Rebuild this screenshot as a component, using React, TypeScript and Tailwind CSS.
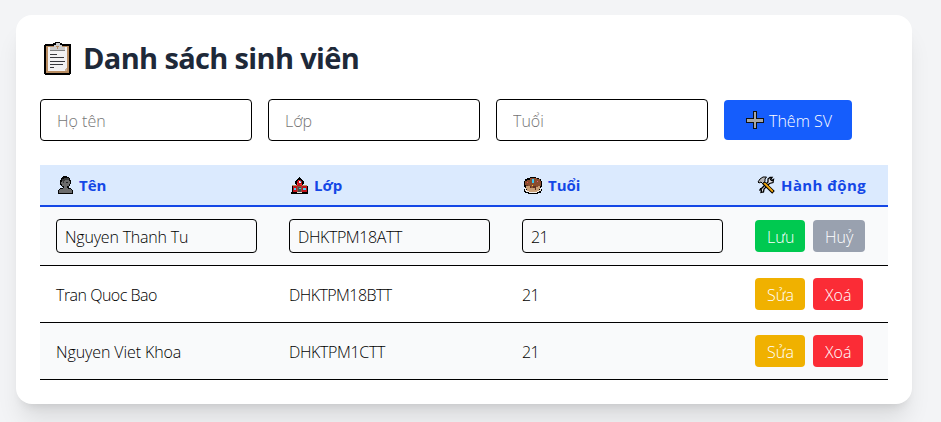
import React from "react";

function ClipboardIcon() {
  return (
    <svg className="mr-[11px] -mt-0.5 block h-[33px] w-7 shrink-0" viewBox="0 0 28 33" shapeRendering="crispEdges">
      <path d="M1 2h8V1h2V0h5v1h2v1h9v30h-1v1H1v-1H0V3h1z" fill="#000" />
      <path d="M2 4h23v27H2z" fill="#b98d62" />
      <path d="M4 5h19v21h-1v1h-1v2H4z" fill="#f3f2f3" />
      <path d="M10 3h2V1h4v2h2v2h3v3H6V5h4z" fill="#cbcbcb" />
      <path d="M12 4h3v1h-1v2h-1V5h-1z" fill="#b98d62" />
      <path d="M6 8h15v1H6z" fill="#808080" />
      <path d="M6 12h7v1H6zM6 15h14v1H6zM6 19h15v1H6zM6 22h13v1H6zM6 25h4v1H6z" fill="#38383d" />
      <path d="M21 27h1v-1h1v3h-2z" fill="#cbb39c" />
    </svg>
  );
}

function PersonIcon() {
  return (
    <svg className="block h-[18px] w-[15px] shrink-0" viewBox="0 0 15 18" shapeRendering="crispEdges">
      <path d="M5 0h4v1h2v1h1v2h1v4h-1v2h-1v2h2v1h1v1h1v4H0v-4h1v-1h1v-1h3v-1H4v-1H3V9H2V4h1V2h1V1h1z" fill="#050505" />
      <path d="M4 5h1V3h6v2h1v3h-1v2H9v2H6v-2H4V8H3V6h1zM2 13h3v-1h5v1h3v1h1v3H1v-3h1z" fill="#6b6b6b" />
      <path d="M4 3h2V2h5v2H7v1H6v2H5V5H4z" fill="#3b3b3b" />
      <path d="M8 6h2v1H8z" fill="#222" />
    </svg>
  );
}

function SchoolIcon() {
  return (
    <svg className="block h-[17px] w-[17px] shrink-0" viewBox="0 0 17 17" shapeRendering="crispEdges">
      <path d="M8 0h1v1h1v1h1v1h1v1h1v3h-1v1h4v1h1v8H0v-2h1V8h4V7H4V4h1V3h1V2h1V1h1z" fill="#000" />
      <path d="M7 3h3v1h1v4h5v7H2V9h4V4h1z" fill="#c3131d" />
      <path d="M7 3h1v1H7zM6 6h1v2H6zM9 7h2v1H9z" fill="#ff3437" />
      <path d="M8 4h2v2H8z" fill="#dff8ff" />
      <path d="M9 4h1v1H9z" fill="#43aee3" />
      <path d="M1 8h5v1H1zM11 8h5v1h-5z" fill="#b98d62" />
      <path d="M3 11h2v2H3zM12 11h3v2h-3z" fill="#50cdf2" />
      <path d="M6 9h5v6H6z" fill="#8e5038" />
      <path d="M7 10h3v5H7z" fill="#4a4a4a" />
      <path d="M8 11h2v1H8z" fill="#60b5bd" />
      <path d="M6 15h5v1H6z" fill="#e6e4df" />
    </svg>
  );
}

function CakeIcon() {
  return (
    <svg className="block h-[17px] w-[18px] shrink-0" viewBox="0 0 18 17" shapeRendering="crispEdges">
      <path d="M6 0h6v1h3v1h2v2h1v6h-1v2h1v2h-1v2h-3v1H4v-1H1v-1H0v-3h1v-2H0V4h1V2h2V1h3z" fill="#000" />
      <path d="M1 11h1v2h2v1h10v-1h2v-2h1v3h-2v1h-2v1H5v-1H2v-1H1z" fill="#f4eee8" />
      <path d="M2 8h14v4h-1v2h-2v1H5v-1H3v-2H2z" fill="#c99f76" />
      <path d="M3 3h3V1h7v1h3v2h1v5h-3v1h-2v2h-1v-2H9v1H6V9H3V8H1V4h2z" fill="#8a4d2e" />
      <path d="M2 8h2v1h3v2H6V9H2zM9 9h3v4h-1v-2H9z" fill="#603221" />
      <path d="M8 2h2v4H8z" fill="#3ac6f0" />
      <path d="M3 5h1v1H3z" fill="#ef4c4b" />
      <path d="M13 4h1v1h-1z" fill="#e1588b" />
      <path d="M8 8h1v1H8z" fill="#ffc928" />
    </svg>
  );
}

function ToolsIcon() {
  return (
    <svg className="block h-[18px] w-[18px] shrink-0" viewBox="0 0 18 18">
      <path d="M2.5 14.5 8 9 11 6 11 3 13 1.5 15 1.5 13.5 3.5 14.5 4.5 16.5 3.5 16 6.5 12.5 7.5 7 13 6.5 16 4 16.5 4.5 14 3.5 13z" fill="#e7e4e7" stroke="#000" strokeWidth="1.3" />
      <path d="M7 5.5 17 15 15.2 17 5.5 7.5z" fill="#f5a70b" stroke="#000" strokeWidth="1.1" />
      <path d="M1 6 3 3 6 1 9.5 1 8 3 8 5.5 5.5 7.5 4 6 2 7z" fill="#b9b9b9" stroke="#000" strokeWidth="1" />
      <path d="M8 7.5 15.5 15" fill="none" stroke="#f5a70b" strokeWidth="1.6" />
    </svg>
  );
}

function PlusIcon() {
  return (
    <svg className="mr-[5px] block h-[18px] w-[18px] shrink-0" viewBox="0 0 18 18" shapeRendering="crispEdges">
      <path d="M7 0h4v7h7v5h-7v6H7v-6H0V7h7z" fill="#111" />
      <path d="M8 1h2v7h7v3h-7v6H8v-6H1V8h7z" fill="#a7a7a7" />
    </svg>
  );
}

const button = "flex h-8 items-center rounded pl-3 pt-0.5 whitespace-nowrap text-white";
const field = "h-[42px] w-[212px] rounded border border-black px-4 pt-0.5 outline-none placeholder:text-[#757575]";
const cellField = "h-[34px] w-[201px] rounded border border-black px-2 pt-0.5 outline-none";
const columns = "grid grid-cols-[233px_233px_233px_149px]";

type RowProps = { name: string; group: string; nameSpacing?: string; groupSpacing: string; shaded?: boolean };

function DataRow({ name, group, nameSpacing = "", groupSpacing, shaded }: RowProps) {
  return (
    <div className={`${columns} h-[57px] items-center border-b border-black ${shaded ? "bg-gray-50" : "bg-white"}`}>
      <span className={`px-4 pt-0.5 ${nameSpacing}`}>{name}</span>
      <span className={`px-4 pt-0.5 ${groupSpacing}`}>{group}</span>
      <span className="px-4 pt-0.5 tracking-[-0.7px]">21</span>
      <div className="flex gap-2 px-4">
        <button className={`${button} w-[50px] bg-[#f0b100]`}>Sửa</button>
        <button className={`${button} w-[50px] bg-[#fb2c36]`}>Xoá</button>
      </div>
    </div>
  );
}

const heading = "flex items-center gap-1.5 pl-[18px] whitespace-nowrap";

export default function App() {
  return (
    <main className="h-[422px] w-full overflow-hidden bg-gray-100 pl-4 pt-[15px] font-['Open_Sans','Noto_Sans',sans-serif] text-base font-light text-black">
      <section className="h-[389px] w-[896px] rounded-2xl bg-white p-6 shadow-xl">
        <div className="flex h-9 items-center pl-1 pt-1">
          <ClipboardIcon />
          <h1 className="-mt-0.5 text-[29px] leading-9 font-bold tracking-[-0.65px] whitespace-nowrap text-gray-800">Danh sách sinh viên</h1>
        </div>
        <div className="mt-6 flex items-center gap-4">
          <input className={field} placeholder="Họ tên" />
          <input className={field} placeholder="Lớp" />
          <input className={field} placeholder="Tuổi" />
          <button className="flex h-10 w-32 items-center rounded bg-[#155dfc] pl-[22px] whitespace-nowrap text-white">
            <PlusIcon />
            <span className="pt-0.5">Thêm SV</span>
          </button>
        </div>
        <div className="mt-6 w-[848px]">
          <div className={`${columns} h-[42px] items-center border-b-2 border-[#1447e6] bg-blue-100 text-[15px] font-bold text-[#1447e6]`}>
            <div className={heading}><PersonIcon /><span className="pt-px">Tên</span></div>
            <div className={heading}><SchoolIcon /><span className="pt-px">Lớp</span></div>
            <div className={heading}><CakeIcon /><span className="pt-px">Tuổi</span></div>
            <div className={heading}><ToolsIcon /><span className="pt-px tracking-[0.4px]">Hành động</span></div>
          </div>
          <div className={`${columns} h-[59px] items-center border-b border-black bg-gray-50`}>
            <div className="px-4"><input className={`${cellField} tracking-[-0.2px]`} defaultValue="Nguyen Thanh Tu" /></div>
            <div className="px-4"><input className={`${cellField} tracking-[-0.4px]`} defaultValue="DHKTPM18ATT" /></div>
            <div className="px-4"><input className={`${cellField} tracking-[-0.7px]`} defaultValue="21" /></div>
            <div className="flex gap-2 px-4">
              <button className={`${button} w-[50px] bg-[#00c950]`}>Lưu</button>
              <button className={`${button} w-[52px] bg-[#99a1af]`}>Huỷ</button>
            </div>
          </div>
          <DataRow name="Tran Quoc Bao" group="DHKTPM18BTT" nameSpacing="tracking-[-0.5px]" groupSpacing="tracking-[-0.55px]" />
          <DataRow name="Nguyen Viet Khoa" group="DHKTPM1CTT" nameSpacing="tracking-[-0.1px]" groupSpacing="tracking-[-0.35px]" shaded />
        </div>
      </section>
    </main>
  );
}
